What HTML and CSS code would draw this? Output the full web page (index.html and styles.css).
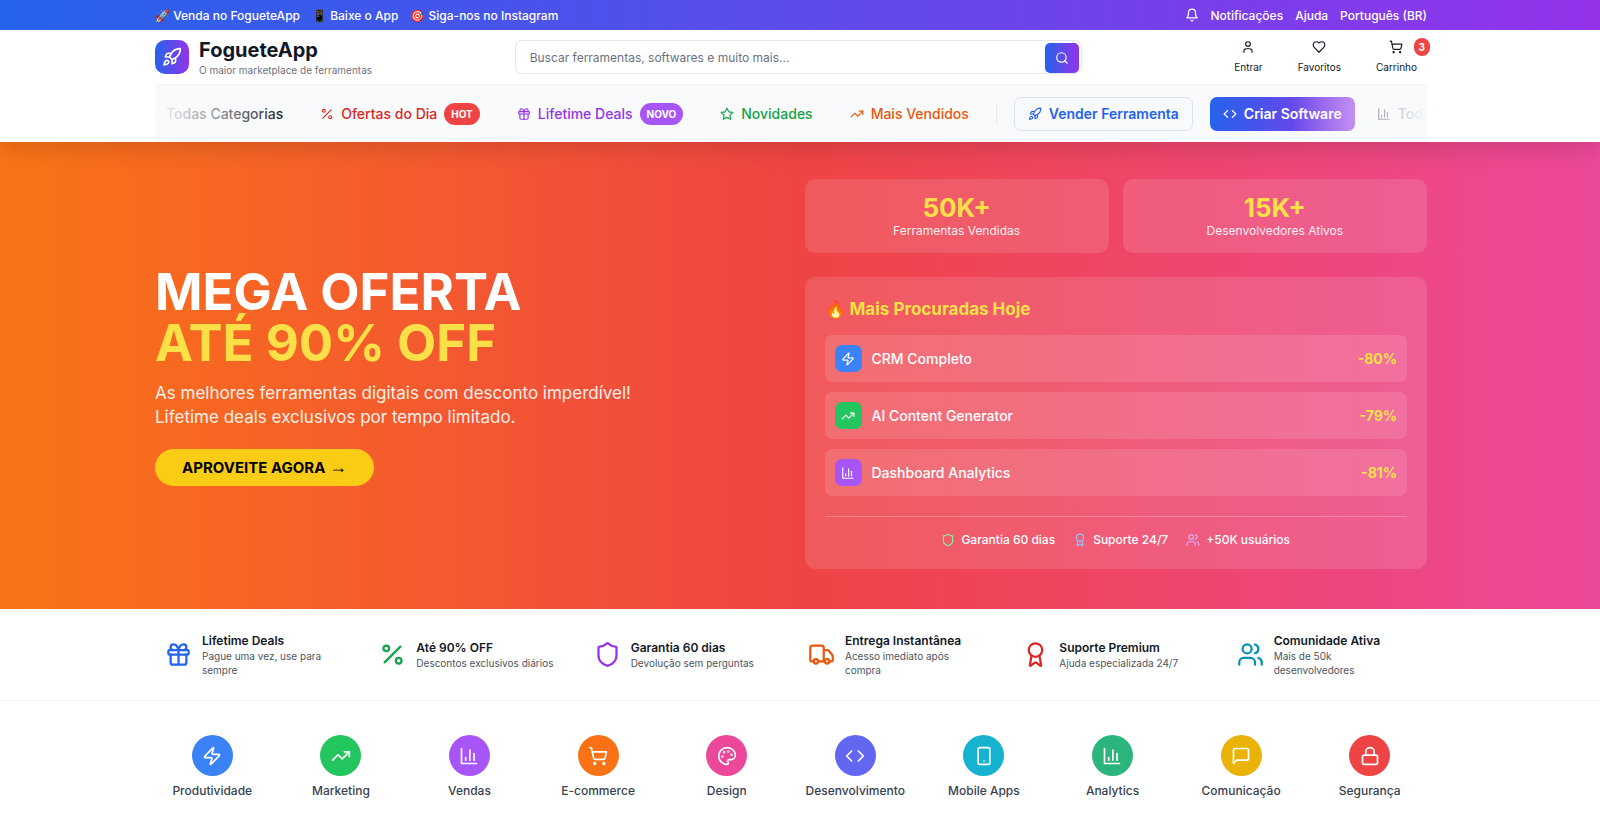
FILE: index.html
```
<!DOCTYPE html>
<html lang="pt-BR">
<head>
    <meta charset="UTF-8">
    <meta name="viewport" content="width=device-width, initial-scale=1.0">
    <title>FogueteApp</title>
    <link rel="stylesheet" href="styles.css">
</head>
<body>
    <!-- Icon sprite -->
    <svg class="sprite" aria-hidden="true">
        <symbol id="i-bell" viewBox="0 0 24 24"><path d="M6 8a6 6 0 0 1 12 0c0 7 3 9 3 9H3s3-2 3-9"/><path d="M10.3 21a1.94 1.94 0 0 0 3.4 0"/></symbol>
        <symbol id="i-rocket" viewBox="0 0 24 24"><path d="M4.5 16.5c-1.5 1.26-2 5-2 5s3.74-.5 5-2c.71-.84.7-2.13-.09-2.91a2.18 2.18 0 0 0-2.91-.09z"/><path d="m12 15-3-3a22 22 0 0 1 2-3.95A12.88 12.88 0 0 1 22 2c0 2.72-.78 7.5-6 11a22.35 22.35 0 0 1-4 2z"/><path d="M9 12H4s.55-3.03 2-4c1.62-1.08 5 0 5 0"/><path d="M12 15v5s3.03-.55 4-2c1.08-1.62 0-5 0-5"/></symbol>
        <symbol id="i-search" viewBox="0 0 24 24"><circle cx="11" cy="11" r="8"/><path d="m21 21-4.3-4.3"/></symbol>
        <symbol id="i-user" viewBox="0 0 24 24"><circle cx="12" cy="7" r="4"/><path d="M19 21v-2a4 4 0 0 0-4-4H9a4 4 0 0 0-4 4v2"/></symbol>
        <symbol id="i-heart" viewBox="0 0 24 24"><path d="M19 14c1.49-1.46 3-3.21 3-5.5A5.5 5.5 0 0 0 16.5 3c-1.76 0-3 .5-4.5 2-1.5-1.5-2.74-2-4.5-2A5.5 5.5 0 0 0 2 8.5c0 2.3 1.5 4.05 3 5.5l7 7Z"/></symbol>
        <symbol id="i-cart" viewBox="0 0 24 24"><circle cx="8" cy="21" r="1"/><circle cx="19" cy="21" r="1"/><path d="M2.05 2.05h2l2.66 12.42a2 2 0 0 0 2 1.58h9.78a2 2 0 0 0 1.95-1.57l1.65-7.43H5.12"/></symbol>
        <symbol id="i-chart" viewBox="0 0 24 24"><path d="M3 3v18h18"/><path d="M18 17V9"/><path d="M13 17V5"/><path d="M8 17v-3"/></symbol>
        <symbol id="i-percent" viewBox="0 0 24 24"><path d="M19 5 5 19"/><circle cx="6.5" cy="6.5" r="2.5"/><circle cx="17.5" cy="17.5" r="2.5"/></symbol>
        <symbol id="i-gift" viewBox="0 0 24 24"><rect x="3" y="8" width="18" height="4" rx="1"/><path d="M12 8v13"/><path d="M19 12v7a2 2 0 0 1-2 2H7a2 2 0 0 1-2-2v-7"/><path d="M7.5 8a2.5 2.5 0 0 1 0-5A4.8 8 0 0 1 12 8a4.8 8 0 0 1 4.5-5 2.5 2.5 0 0 1 0 5"/></symbol>
        <symbol id="i-star" viewBox="0 0 24 24"><path d="m12 2 3.09 6.26L22 9.27l-5 4.87 1.18 6.88L12 17.77l-6.18 3.25L7 14.14 2 9.27l6.91-1.01L12 2z"/></symbol>
        <symbol id="i-trend" viewBox="0 0 24 24"><path d="m22 7-8.5 8.5-5-5L2 17"/><path d="M16 7h6v6"/></symbol>
        <symbol id="i-code" viewBox="0 0 24 24"><path d="m16 18 6-6-6-6"/><path d="m8 6-6 6 6 6"/></symbol>
        <symbol id="i-zap" viewBox="0 0 24 24"><path d="M4 14a1 1 0 0 1-.78-1.63l9.9-10.2a.5.5 0 0 1 .86.46l-1.92 6.02A1 1 0 0 0 13 10h7a1 1 0 0 1 .78 1.63l-9.9 10.2a.5.5 0 0 1-.86-.46l1.92-6.02A1 1 0 0 0 11 14z"/></symbol>
        <symbol id="i-shield" viewBox="0 0 24 24"><path d="M20 13c0 5-3.5 7.5-7.66 8.95a1 1 0 0 1-.67-.01C7.5 20.5 4 18 4 13V6a1 1 0 0 1 1-1c2 0 4.5-1.2 6.24-2.72a1.17 1.17 0 0 1 1.52 0C14.51 3.81 17 5 19 5a1 1 0 0 1 1 1z"/></symbol>
        <symbol id="i-award" viewBox="0 0 24 24"><circle cx="12" cy="8" r="6"/><path d="m15.48 12.89 1.52 8.53a.5.5 0 0 1-.81.47l-3.58-2.69a1 1 0 0 0-1.2 0l-3.59 2.69a.5.5 0 0 1-.81-.47l1.51-8.53"/></symbol>
        <symbol id="i-users" viewBox="0 0 24 24"><path d="M16 21v-2a4 4 0 0 0-4-4H6a4 4 0 0 0-4 4v2"/><circle cx="9" cy="7" r="4"/><path d="M22 21v-2a4 4 0 0 0-3-3.87"/><path d="M16 3.13a4 4 0 0 1 0 7.75"/></symbol>
        <symbol id="i-truck" viewBox="0 0 24 24"><path d="M14 18V6a2 2 0 0 0-2-2H4a2 2 0 0 0-2 2v11a1 1 0 0 0 1 1h2"/><path d="M15 18H9"/><path d="M19 18h2a1 1 0 0 0 1-1v-3.65a1 1 0 0 0-.22-.62l-3.48-4.35A1 1 0 0 0 17.52 8H14"/><circle cx="17" cy="18" r="2"/><circle cx="7" cy="18" r="2"/></symbol>
        <symbol id="i-palette" viewBox="0 0 24 24"><circle cx="13.5" cy="6.5" r=".5"/><circle cx="17.5" cy="10.5" r=".5"/><circle cx="8.5" cy="7.5" r=".5"/><circle cx="6.5" cy="12.5" r=".5"/><path d="M12 2C6.5 2 2 6.5 2 12s4.5 10 10 10c.93 0 1.65-.75 1.65-1.69 0-.44-.18-.83-.44-1.12-.29-.29-.44-.65-.44-1.13a1.64 1.64 0 0 1 1.67-1.67h2c3.05 0 5.55-2.5 5.55-5.55C21.97 6.01 17.46 2 12 2z"/></symbol>
        <symbol id="i-phone" viewBox="0 0 24 24"><rect x="5" y="2" width="14" height="20" rx="2"/><path d="M12 18h.01"/></symbol>
        <symbol id="i-message" viewBox="0 0 24 24"><path d="M21 15a2 2 0 0 1-2 2H7l-4 4V5a2 2 0 0 1 2-2h14a2 2 0 0 1 2 2z"/></symbol>
        <symbol id="i-lock" viewBox="0 0 24 24"><rect x="3" y="11" width="18" height="11" rx="2"/><path d="M7 11V7a5 5 0 0 1 10 0v4"/></symbol>
    </svg>

    <header class="header">
        <div class="topbar">
            <div class="container topbar-inner">
                <div class="topbar-left">
                    <a href="#">🚀 Venda no FogueteApp</a>
                    <a href="#">📱 Baixe o App</a>
                    <a href="#">🎯 Siga-nos no Instagram</a>
                </div>
                <div class="topbar-right">
                    <svg class="icon"><use href="#i-bell"/></svg>
                    <a href="#">Notificações</a>
                    <a href="#">Ajuda</a>
                    <a href="#">Português (BR)</a>
                </div>
            </div>
        </div>

        <div class="header-body">
            <div class="container main-header">
                <a href="#" class="logo">
                    <span class="logo-icon"><svg class="icon"><use href="#i-rocket"/></svg></span>
                    <span>
                        <span class="logo-name">FogueteApp</span>
                        <span class="logo-tagline">O maior marketplace de ferramentas</span>
                    </span>
                </a>
                <form class="search">
                    <input type="text" aria-label="Buscar" placeholder="Buscar ferramentas, softwares e muito mais...">
                    <button type="submit" aria-label="Buscar"><svg class="icon"><use href="#i-search"/></svg></button>
                </form>
                <div class="actions">
                    <button><svg class="icon"><use href="#i-user"/></svg>Entrar</button>
                    <button><svg class="icon"><use href="#i-heart"/></svg>Favoritos</button>
                    <button><svg class="icon"><use href="#i-cart"/></svg>Carrinho<span class="cart-count">3</span></button>
                </div>
            </div>

            <div class="container">
                <nav class="nav">
                    <div class="nav-track">
                        <div class="nav-group">
                            <a href="#" class="nav-item"><svg class="icon"><use href="#i-chart"/></svg>Todas Categorias</a>
                            <a href="#" class="nav-item red"><svg class="icon"><use href="#i-percent"/></svg>Ofertas do Dia<span class="tag tag-hot">HOT</span></a>
                            <a href="#" class="nav-item purple"><svg class="icon"><use href="#i-gift"/></svg>Lifetime Deals<span class="tag tag-new">NOVO</span></a>
                            <a href="#" class="nav-item green"><svg class="icon"><use href="#i-star"/></svg>Novidades</a>
                            <a href="#" class="nav-item orange"><svg class="icon"><use href="#i-trend"/></svg>Mais Vendidos</a>
                            <span class="nav-divider"></span>
                            <button class="btn-sell"><svg class="icon"><use href="#i-rocket"/></svg>Vender Ferramenta</button>
                            <button class="btn-create"><svg class="icon"><use href="#i-code"/></svg>Criar Software</button>
                        </div>
                        <div class="nav-group" aria-hidden="true">
                            <a href="#" class="nav-item"><svg class="icon"><use href="#i-chart"/></svg>Todas Categorias</a>
                        </div>
                    </div>
                </nav>
            </div>
        </div>
    </header>

    <section class="hero">
        <div class="container hero-grid">
            <div class="hero-left">
                <h1>MEGA OFERTA <span>ATÉ 90% OFF</span></h1>
                <p class="hero-text">As melhores ferramentas digitais com desconto imperdível! Lifetime deals exclusivos por tempo limitado.</p>
                <button class="hero-btn">APROVEITE AGORA <span class="arrow">→</span></button>
            </div>
            <div class="hero-right">
                <div class="stats">
                    <div class="stat"><strong>50K+</strong><span>Ferramentas Vendidas</span></div>
                    <div class="stat"><strong>15K+</strong><span>Desenvolvedores Ativos</span></div>
                </div>
                <div class="panel">
                    <h2>🔥 Mais Procuradas Hoje</h2>
                    <ul class="tools">
                        <li><span class="tool-icon bg-blue"><svg class="icon"><use href="#i-zap"/></svg></span>CRM Completo<b>-80%</b></li>
                        <li><span class="tool-icon bg-green"><svg class="icon"><use href="#i-trend"/></svg></span>AI Content Generator<b>-79%</b></li>
                        <li><span class="tool-icon bg-purple"><svg class="icon"><use href="#i-chart"/></svg></span>Dashboard Analytics<b>-81%</b></li>
                    </ul>
                    <div class="trust">
                        <span><svg class="icon trust-green"><use href="#i-shield"/></svg>Garantia 60 dias</span>
                        <span><svg class="icon trust-blue"><use href="#i-award"/></svg>Suporte 24/7</span>
                        <span><svg class="icon trust-purple"><use href="#i-users"/></svg>+50K usuários</span>
                    </div>
                </div>
            </div>
        </div>
    </section>

    <section class="features">
        <div class="container features-grid">
            <div class="feature"><svg class="icon blue"><use href="#i-gift"/></svg><div><h3>Lifetime Deals</h3><p>Pague uma vez, use para sempre</p></div></div>
            <div class="feature"><svg class="icon green"><use href="#i-percent"/></svg><div><h3>Até 90% OFF</h3><p>Descontos exclusivos diários</p></div></div>
            <div class="feature"><svg class="icon purple"><use href="#i-shield"/></svg><div><h3>Garantia 60 dias</h3><p>Devolução sem perguntas</p></div></div>
            <div class="feature"><svg class="icon orange"><use href="#i-truck"/></svg><div><h3>Entrega Instantânea</h3><p>Acesso imediato após compra</p></div></div>
            <div class="feature"><svg class="icon red"><use href="#i-award"/></svg><div><h3>Suporte Premium</h3><p>Ajuda especializada 24/7</p></div></div>
            <div class="feature"><svg class="icon teal"><use href="#i-users"/></svg><div><h3>Comunidade Ativa</h3><p>Mais de 50k desenvolvedores</p></div></div>
        </div>
    </section>

    <section class="categories">
        <div class="container categories-grid">
            <a href="#"><span class="circle bg-blue"><svg class="icon"><use href="#i-zap"/></svg></span>Produtividade</a>
            <a href="#"><span class="circle bg-green"><svg class="icon"><use href="#i-trend"/></svg></span>Marketing</a>
            <a href="#"><span class="circle bg-purple"><svg class="icon"><use href="#i-chart"/></svg></span>Vendas</a>
            <a href="#"><span class="circle bg-orange"><svg class="icon"><use href="#i-cart"/></svg></span>E-commerce</a>
            <a href="#"><span class="circle bg-pink"><svg class="icon"><use href="#i-palette"/></svg></span>Design</a>
            <a href="#"><span class="circle bg-indigo"><svg class="icon"><use href="#i-code"/></svg></span>Desenvolvimento</a>
            <a href="#"><span class="circle bg-cyan"><svg class="icon"><use href="#i-phone"/></svg></span>Mobile Apps</a>
            <a href="#"><span class="circle bg-emerald"><svg class="icon"><use href="#i-chart"/></svg></span>Analytics</a>
            <a href="#"><span class="circle bg-yellow"><svg class="icon"><use href="#i-message"/></svg></span>Comunicação</a>
            <a href="#"><span class="circle bg-red"><svg class="icon"><use href="#i-lock"/></svg></span>Segurança</a>
        </div>
    </section>
</body>
</html>
```
FILE: styles.css
```
/* General styles */
* {
    box-sizing: border-box;
    margin: 0;
    padding: 0;
}

body {
    font-family: Inter, "Liberation Sans", sans-serif;
    font-size: 12px;
    line-height: 17px;
    color: #111827;
    background: #fff;
}

a {
    color: inherit;
    text-decoration: none;
}

button {
    font: inherit;
    color: inherit;
    border: none;
    background: none;
    cursor: pointer;
}

.sprite {
    display: none;
}

.icon {
    width: 14px;
    height: 14px;
    flex-shrink: 0;
    fill: none;
    stroke: currentColor;
    stroke-width: 2;
    stroke-linecap: round;
    stroke-linejoin: round;
}

.container {
    width: calc(100% - 28px);
    max-width: 1272px;
    margin: 0 auto;
}

.topbar, .header-body, .hero, .features, .categories {
    padding-right: 18px;
}

.blue { color: #2563eb; }
.green { color: #16a34a; }
.purple { color: #9333ea; }
.orange { color: #ea580c; }
.red { color: #dc2626; }
.teal { color: #0891b2; }

.bg-blue { background: #3b82f6; }
.bg-green { background: #22c55e; }
.bg-purple { background: #a855f7; }
.bg-orange { background: #f97316; }
.bg-pink { background: #ec4899; }
.bg-indigo { background: #6366f1; }
.bg-cyan { background: #16b3d0; }
.bg-emerald { background: #2bb57d; }
.bg-yellow { background: #eab308; }
.bg-red { background: #ef4444; }

/* Header */
.header {
    position: relative;
    z-index: 1;
    background: #fff;
    box-shadow: 0 8px 20px rgba(0, 0, 0, 0.12);
}

.topbar {
    color: #fff;
    font-weight: 500;
    background: linear-gradient(to right, #2563eb, #9333ea);
}

.topbar-inner {
    display: flex;
    justify-content: space-between;
    height: 30px;
}

.topbar-left, .topbar-right {
    display: flex;
    align-items: center;
    gap: 12px;
}

.main-header {
    display: flex;
    justify-content: space-between;
    align-items: center;
    height: 54px;
}

.logo {
    display: flex;
    align-items: center;
    gap: 10px;
}

.logo-icon {
    display: grid;
    place-items: center;
    width: 34px;
    height: 34px;
    color: #fff;
    border-radius: 10px;
    background: linear-gradient(to right, #2563eb, #9333ea);
}

.logo-icon .icon {
    width: 20px;
    height: 20px;
}

.logo-name, .logo-tagline {
    display: block;
}

.logo-name {
    font-size: 20px;
    line-height: 25px;
    font-weight: 700;
}

.logo-tagline {
    font-size: 10px;
    line-height: 14px;
    color: #6b7280;
}

.search {
    position: relative;
    flex: 0 1 567px;
}

.search input {
    display: block;
    width: 100%;
    height: 34px;
    padding: 0 48px 0 14px;
    font: inherit;
    border: 1px solid #e5e7eb;
    border-radius: 7px;
    outline: none;
}

.search input::placeholder {
    color: #6b7280;
}

.search button {
    position: absolute;
    right: 3px;
    top: 3px;
    display: grid;
    place-items: center;
    width: 34px;
    height: 30px;
    color: #fff;
    border-radius: 5px;
    background: linear-gradient(to right, #2563eb, #9333ea);
}

.actions {
    display: flex;
    gap: 15px;
}

.actions button {
    position: relative;
    display: flex;
    flex-direction: column;
    align-items: center;
    gap: 6px;
    padding: 0 10px;
    font-size: 10px;
    line-height: 14px;
}

.cart-count {
    position: absolute;
    top: -2px;
    right: -3px;
    padding: 2px 5px;
    color: #fff;
    font-weight: 700;
    border-radius: 9px;
    background: #ef4444;
}

/* Scrolling menu */
.nav {
    position: relative;
    overflow: hidden;
    height: 58px;
    border-top: 1px solid #f3f4f6;
    background: #f9fafb;
}

.nav::before, .nav::after {
    content: '';
    position: absolute;
    top: 0;
    bottom: 0;
    width: 136px;
    z-index: 1;
    pointer-events: none;
}

.nav::before {
    left: 0;
    background: linear-gradient(to right, #f9fafb, transparent);
}

.nav::after {
    right: 0;
    background: linear-gradient(to left, #f9fafb, transparent);
}

.nav-track {
    display: flex;
    gap: 12px;
    width: max-content;
    height: 100%;
    margin-left: -20px; /* first entry is already leaving the strip */
}

.nav-group {
    display: flex;
    align-items: center;
    gap: 17px;
    font-size: 14px;
    font-weight: 500;
    white-space: nowrap;
}

.nav-item, .btn-sell, .btn-create {
    display: flex;
    align-items: center;
    gap: 7px;
}

.nav-item {
    padding: 0 10px;
}

.tag {
    padding: 2px 7px;
    font-size: 10px;
    line-height: 18px;
    font-weight: 700;
    color: #fff;
    border-radius: 11px;
}

.tag-hot { background: #ef4444; }
.tag-new { background: #a855f7; }

.nav-divider {
    width: 1px;
    height: 20px;
    background: #e5e7eb;
}

.btn-sell, .btn-create {
    height: 34px;
    padding: 0 13px;
    font-weight: 600;
    border-radius: 7px;
}

.btn-sell {
    color: #2563eb;
    border: 1px solid #dbe3ee;
}

.btn-create {
    color: #fff;
    background: linear-gradient(to right, #2563eb, #9333ea);
}

/* Hero */
.hero {
    padding-top: 37px;
    padding-bottom: 40px;
    color: #fff;
    background: linear-gradient(to right, #f97316, #ef4444, #ec4899);
}

.hero-grid {
    display: grid;
    grid-template-columns: 1fr 1fr;
    align-items: center;
    gap: 27px;
}

.hero-left {
    padding-top: 4px;
}

.hero h1 {
    font-size: 51px;
    line-height: 51px;
    font-weight: 700;
}

.hero h1 span {
    display: block;
    color: #fde047;
}

.hero-text {
    max-width: 490px;
    margin: 13px 0 20px;
    font-size: 17px;
    line-height: 24px;
    opacity: 0.9;
}

.hero-btn {
    padding: 7px 27px;
    font-size: 15px;
    line-height: 23px;
    font-weight: 700;
    color: #000;
    border-radius: 19px;
    background: #facc15;
}

.arrow {
    font-family: "Liberation Sans", sans-serif;
    font-size: 18px;
    font-weight: 400;
    line-height: 1;
}

.hero-right {
    display: grid;
    gap: 24px;
}

.stats {
    display: grid;
    grid-template-columns: 1fr 1fr;
    gap: 14px;
}

.stat {
    display: grid;
    padding: 14px;
    text-align: center;
    border-radius: 10px;
    background: rgba(255, 255, 255, 0.12);
}

.stat strong {
    font-size: 26px;
    line-height: 29px;
    color: #fde047;
}

.stat span {
    opacity: 0.9;
}

.panel {
    padding: 20px;
    border-radius: 10px;
    background: rgba(255, 255, 255, 0.12);
}

.panel h2 {
    margin-bottom: 14px;
    font-size: 17px;
    line-height: 24px;
    color: #fde047;
}

.tools {
    display: grid;
    gap: 10px;
    list-style: none;
}

.tools li {
    display: flex;
    align-items: center;
    gap: 10px;
    height: 47px;
    padding: 0 10px;
    font-size: 14px;
    font-weight: 500;
    border-radius: 7px;
    background: rgba(255, 255, 255, 0.12);
}

.tools b {
    margin-left: auto;
    color: #fde047;
}

.tool-icon {
    display: grid;
    place-items: center;
    width: 27px;
    height: 27px;
    border-radius: 7px;
}

.trust {
    display: flex;
    justify-content: center;
    gap: 18px;
    margin-top: 20px;
    padding: 14px 0 1px;
    font-weight: 500;
    border-top: 1px solid rgba(255, 255, 255, 0.25);
}

.trust span {
    display: flex;
    align-items: center;
    gap: 6px;
}

.trust-green { color: #86efac; }
.trust-blue { color: #93c5fd; }
.trust-purple { color: #d8b4fe; }

/* Benefits */
.features {
    padding-top: 13px;
    padding-bottom: 13px;
    border-bottom: 1px solid #f3f4f6;
}

.features-grid {
    display: grid;
    grid-template-columns: repeat(6, 1fr);
    gap: 14px;
}

.feature {
    display: flex;
    align-items: center;
    gap: 10px;
    padding: 10px 14px 10px 10px;
}

.feature .icon {
    width: 27px;
    height: 27px;
}

.feature h3 {
    font-size: 12px;
    font-weight: 600;
}

.feature p {
    font-size: 10px;
    line-height: 14px;
    color: #4b5563;
}

/* Categories */
.categories {
    padding-top: 27px;
    padding-bottom: 27px;
}

.categories-grid {
    display: grid;
    grid-template-columns: repeat(10, 1fr);
    gap: 14px;
}

.categories a {
    display: flex;
    flex-direction: column;
    align-items: center;
    gap: 6px;
    padding: 7px 0;
    font-weight: 500;
    color: #374151;
}

.circle {
    display: grid;
    place-items: center;
    width: 41px;
    height: 41px;
    color: #fff;
    border-radius: 50%;
}

.circle .icon {
    width: 20px;
    height: 20px;
}
```
